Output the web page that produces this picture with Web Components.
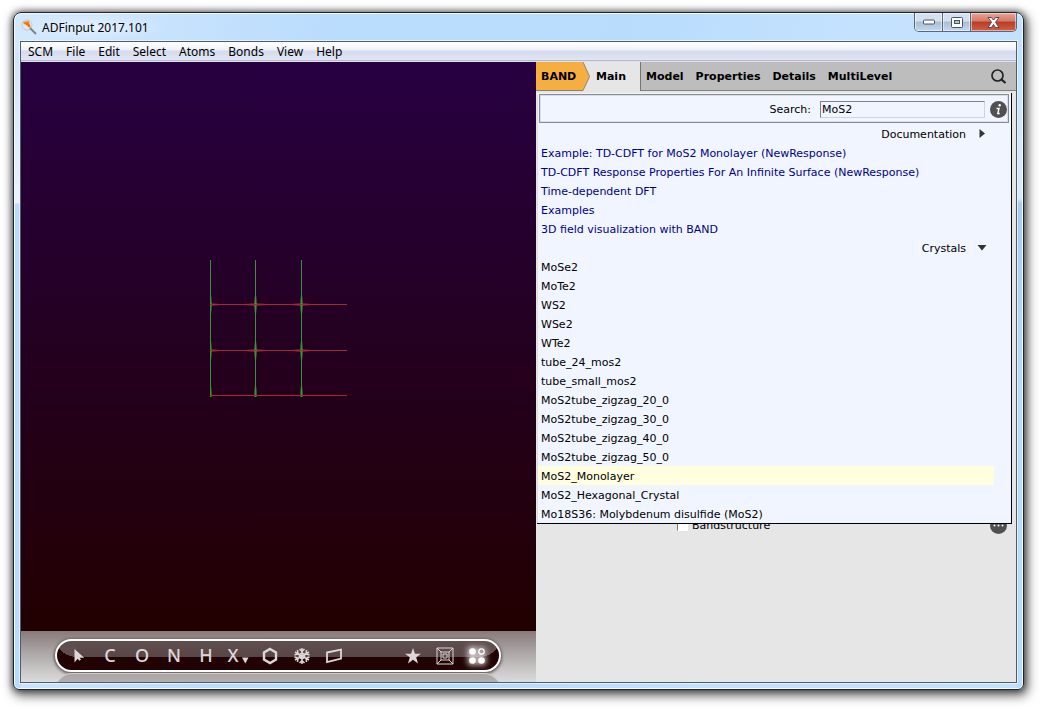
<!DOCTYPE html>
<html lang="en">
<head>
<meta charset="utf-8">
<title>ADFinput 2017.101</title>
<style>
html, body { height: 100%; }
body { margin: 0; box-sizing: border-box; padding: 12px 18px 19px 13px; background: #fff; font: 11px/19px "DejaVu Sans", sans-serif; color: #000; overflow: hidden; }
</style>
</head>
<body>
<app-window heading="ADFinput 2017.101">
  <menu-bar slot="menu" items="SCM,File,Edit,Select,Atoms,Bonds,View,Help"></menu-bar>
  <structure-view></structure-view>
  <side-panel>
    <tab-bar slot="tabs"></tab-bar>
    <search-popup slot="popup">
      <result-heading slot="results">Documentation</result-heading>
      <result-item slot="results" link>Example: TD-CDFT for MoS2 Monolayer (NewResponse)</result-item>
      <result-item slot="results" link>TD-CDFT Response Properties For An Infinite Surface (NewResponse)</result-item>
      <result-item slot="results" link>Time-dependent DFT</result-item>
      <result-item slot="results" link>Examples</result-item>
      <result-item slot="results" link>3D field visualization with BAND</result-item>
      <result-heading slot="results" open>Crystals</result-heading>
      <result-item slot="results">MoSe2</result-item>
      <result-item slot="results">MoTe2</result-item>
      <result-item slot="results">WS2</result-item>
      <result-item slot="results">WSe2</result-item>
      <result-item slot="results">WTe2</result-item>
      <result-item slot="results">tube_24_mos2</result-item>
      <result-item slot="results">tube_small_mos2</result-item>
      <result-item slot="results">MoS2tube_zigzag_20_0</result-item>
      <result-item slot="results">MoS2tube_zigzag_30_0</result-item>
      <result-item slot="results">MoS2tube_zigzag_40_0</result-item>
      <result-item slot="results">MoS2tube_zigzag_50_0</result-item>
      <result-item slot="results" active>MoS2_Monolayer</result-item>
      <result-item slot="results">MoS2_Hexagonal_Crystal</result-item>
      <result-item slot="results">Mo18S36: Molybdenum disulfide (MoS2)</result-item>
    </search-popup>
  </side-panel>
</app-window>

<script>
const RESET = `
  *, *::before, *::after { box-sizing: border-box; }
  button { font: inherit; color: inherit; background: none; border: 0; padding: 0; margin: 0; }
  svg { display: block; }
`;
function define(name, render) {
  customElements.define(name, class extends HTMLElement {
    constructor() {
      super();
      this.attachShadow({ mode: "open" });
    }
    connectedCallback() {
      this.shadowRoot.innerHTML = `<style>${RESET}</style>` + render(this);
    }
  });
}

define("app-window", el => `
<style>
  :host { display: flex; flex-direction: column; height: 100%; box-sizing: border-box; padding: 0 6px 6px;
    border: 1px solid #1b2530; border-radius: 8px 8px 6px 6px;
    background:
      linear-gradient(#cfe5fb, #eaf4fd 150px, #b9dcfd 151px) 0 40px / 7px 100% no-repeat,
      linear-gradient(#c2e1fe, #d8ebfd 145px, #a9cbee 151px, #b9dcfb 340px) 100% 40px / 7px 100% no-repeat,
      linear-gradient(100deg, #d3e8fc 0, #badcfd 320px, #b9dcfd 55%, #c4e2fe 75%, #c2e1fe 100%);
    box-shadow: inset 0 0 0 1px #f4faff, 0 0 6px 1px rgba(0,0,0,.5), 2px 4px 11px 2px rgba(0,0,0,.55); }
  header { display: flex; height: 28px; flex: none; justify-content: space-between; }
  .title { display: flex; align-items: center; gap: 5px; font: 12px/17px "Noto Sans", sans-serif; padding: 0 20px 0 1px;
    background: radial-gradient(closest-side, rgba(255,255,255,.45), rgba(255,255,255,0)); }
  h1 { font: inherit; margin: 0; }
  .controls { display: flex; height: 19px; border: 1px solid #58677b; border-top: 0; border-radius: 0 0 5px 5px; overflow: hidden; }
  .controls button { width: 28px; display: grid; place-items: center; background: linear-gradient(#d3e0ee 0 45%, #a9bdd4 50%, #c4d9ee); box-shadow: inset 0 0 0 1px rgba(255,255,255,.5); border-right: 1px solid #58677b; }
  .controls .close { width: 45px; border: 0; background: linear-gradient(#e6a596 0, #d37a68 45%, #bb3a22 50%, #cf6247); }
  .client { flex: 1; min-height: 0; display: flex; flex-direction: column; border: 1px solid #4e5c6c; box-shadow: 0 0 0 1px rgba(235,247,255,.75); }
  main { flex: 1; min-height: 0; display: flex; }
  ::slotted(structure-view) { flex: 1; min-width: 0; }
</style>
<header>
  <div class="title">
    <svg width="16" height="16" viewBox="0 0 16 16" aria-hidden="true">
      <circle cx="6" cy="6" r="5" fill="#e4e6e8" stroke="#c2cad2"/>
      <path d="M2 3l6-1 1 5-3-1-3-1z" fill="#ff8414"/><path d="M5 4l4 4" stroke="#ef6c00" stroke-width="2"/>
      <path d="M9 9l6 6" stroke="#828487" stroke-width="2"/>
    </svg>
    <h1>${el.getAttribute("heading")}</h1>
  </div>
  <div class="controls">
    <button aria-label="Minimize"><svg width="14" height="6" viewBox="0 0 14 6"><rect x="1.5" y="1" width="11" height="4" rx="1" fill="#fff" stroke="#485365"/></svg></button>
    <button aria-label="Maximize"><svg width="12" height="11" viewBox="0 0 12 11"><rect x=".5" y=".5" width="11" height="10" rx="1" fill="#fff" stroke="#485365"/><rect x="3.5" y="3.5" width="5" height="3" fill="#adc2d8" stroke="#485365"/></svg></button>
    <button class="close" aria-label="Close"><svg width="13" height="11" viewBox="0 0 13 11"><path d="M1 .5h3.500L6.500 3 8.500.5H12L8.500 5.300 12 10.500H8.500L6.500 7.500 4.500 10.500H1L4.500 5.300z" fill="#fff" stroke="#5a4550" stroke-width="1"/></svg></button>
  </div>
</header>
<div class="client"><slot name="menu"></slot><main><slot></slot></main></div>
`);

define("menu-bar", el => `
<style>
  :host { display: block; flex: none; height: 20px; background: linear-gradient(#fff 0, #eef1f9 40%, #d5dbed 45%, #dfe5f4 90%, #aab0c0 91%, #f3f4f8 100%); }
  nav { display: flex; gap: 13px; padding-left: 7px; font: 12px/20px "Noto Sans", sans-serif; }
</style>
<nav>${el.getAttribute("items").split(",").map(t => `<button>${t}</button>`).join("")}</nav>
`);

define("structure-view", () => `
<style>
  :host { display: flex; flex-direction: column; }
  .canvas { flex: 1; display: grid; place-items: center; padding-bottom: 36px; background: linear-gradient(#270041, #240020 50%, #220000); }
</style>
<div class="canvas">
  <svg width="137" height="137" viewBox="0 0 137 137" role="img" aria-label="Unit cell grid">
    <defs>
      <radialGradient id="g"><stop offset="0" stop-color="#3fc03f"/><stop offset="1" stop-color="#3fc03f" stop-opacity="0"/></radialGradient>
      <radialGradient id="r"><stop offset="0" stop-color="#d03838"/><stop offset="1" stop-color="#d03838" stop-opacity="0"/></radialGradient>
    </defs>
    <g fill="url(#r)">${[44.5, 90.5].map(y => [0, 45.5, 91.5].map(x => `<ellipse cx="${x}" cy="${y}" rx="13" ry="1.700"/>`).join("")).join("")}</g>
    <g fill="url(#g)">${[0.5, 45.5, 91.5].map(x => [44.5, 90.5, 135].map(y => `<ellipse cx="${x}" cy="${y}" rx="1.900" ry="12"/>`).join("")).join("")}</g>
    <path d="M.5 0v136M45.500 0v136M91.500 0v136" stroke="#3f8f42"/>
    <path d="M0 44.500h137M0 90.500h137M0 135.500h137" stroke="#a02a32"/>
  </svg>
</div>
<tool-dock></tool-dock>
`);

define("tool-dock", () => `
<style>
  :host { display: block; flex: none; height: 51px; padding: 8px 35px 0 34px; box-sizing: border-box; overflow: hidden; background: linear-gradient(#887a7a, #aaa4a4 40%, #dcdcdc); }
  .pill { display: flex; justify-content: space-between; height: 33px; padding: 0 6px 0 5px; border: 2px solid #fff; border-radius: 17px;
    background: radial-gradient(ellipse 20px 16px at 20px 0, #604e4e 99%, transparent) 0 0 / 20px 16px no-repeat,
      radial-gradient(ellipse 20px 16px at 0 0, #604e4e 99%, transparent) 100% 0 / 20px 16px no-repeat,
      linear-gradient(#604e4e, #584646) center top / calc(100% - 40px) 16px no-repeat, #220303;
    box-shadow: 0 1px 3px 1px rgba(40,20,20,.6); }
  .group { display: flex; }
  button { width: 32px; height: 29px; display: flex; align-items: center; justify-content: center; color: #dcd8d8; font: 500 18px/29px "Noto Sans", sans-serif; }
  .more { gap: 2px; }
  svg { fill: none; stroke: currentColor; }
  .glow { filter: drop-shadow(0 0 3px #fff) drop-shadow(0 0 3px rgba(255,255,255,.6)); }
  .shine { height: 22px; margin-top: 1px; border: 1px solid #d0cece; border-bottom: 0; border-radius: 17px 17px 0 0; background: linear-gradient(#aaa6a6, #bdbbbb); }
</style>
<div class="pill" role="toolbar">
  <div class="group">
    <button aria-label="Select"><svg width="18" height="18" viewBox="0 0 18 18"><path d="M5.500 2v13.500l3.200-3.700 1.600 2 1.700-1.300-1.300-1.800h4.500z" fill="currentColor" stroke="none"/></svg></button>
    <button>C</button><button>O</button><button>N</button><button>H</button>
    <button class="more" aria-label="X, other elements">X<svg width="8" height="18" viewBox="0 0 8 18"><path d="M1 10.500h6.500L4.300 16.500z" fill="currentColor" stroke="none"/></svg></button>
    <button aria-label="Ring"><svg width="18" height="18" viewBox="0 0 18 18"><path d="M9 2l6 3.500v7L9 16l-6-3.500v-7z" stroke-width="2.400"/></svg></button>
    <button aria-label="Crystal"><svg width="18" height="18" viewBox="0 0 18 18" stroke-width="1.500"><path d="M9 1v16M2 5l14 8M2 13L16 5M6.500 2L9 4.500 11.500 2M6.500 16L9 13.500l2.500 2.500M1.500 8l3.500-1.300L4.500 3M1.500 10L5 11.300 4.500 15M16.500 8L13 6.700l.5-3.700M16.500 10L13 11.300l.5 3.700M9 6l2.600 1.500v3L9 12l-2.600-1.500v-3z"/></svg></button>
    <button aria-label="Slab"><svg width="18" height="18" viewBox="0 0 18 18"><path d="M2 5.500L16 2.500v9L2 15z" stroke-width="1.800"/></svg></button>
  </div>
  <div class="group">
    <button aria-label="Favorites"><svg width="18" height="18" viewBox="0 0 18 18"><path d="M9 1l2 5.700h6l-4.800 3.600L14 16.500l-5-3.800-5 3.800 1.800-6.200L1 6.700h6z" fill="currentColor" stroke="none"/></svg></button>
    <button aria-label="Perspective box"><svg width="18" height="18" viewBox="0 0 18 18"><path d="M1 1h16v16H1zM5 5h8v8H5zM7 7h4v4H7zM1 1l4 4M17 1l-4 4M1 17l4-4M17 17l-4-4" stroke-width="1"/></svg></button>
    <button aria-label="Atom display"><svg class="glow" width="18" height="18" viewBox="0 0 18 18" overflow="visible"><g fill="#fff" stroke="none"><circle cx="4.500" cy="4.500" r="3.300"/><circle cx="4.500" cy="13.500" r="3.300"/><circle cx="13.500" cy="13.500" r="3.300"/></g><circle cx="13.500" cy="4.500" r="2.700" stroke="#fff" stroke-width="1.300"/></svg></button>
  </div>
</div>
<div class="shine"></div>
`);

define("side-panel", () => `
<style>
  :host { display: flex; flex-direction: column; flex: none; width: 480px; background: #e6e6e6; position: relative; }
  .form { flex: 1; display: flex; flex-direction: column; padding: 425px 9px 0 141px; }
  .row { display: flex; align-items: center; height: 19px; }
  label { display: flex; align-items: center; gap: 4px; flex: 1; }
  input { appearance: none; width: 11px; height: 11px; margin: 0; background: #fff; border: 1px solid #777; border-right-color: #fff; border-bottom-color: #fff; }
</style>
<slot name="tabs"></slot>
<div class="form">
  <div class="row">
    <label><input type="checkbox">Bandstructure</label>
    <button aria-label="More"><svg width="17" height="17" viewBox="0 0 17 17"><circle cx="8.500" cy="8.500" r="8.500" fill="#505050"/><g fill="#fff"><circle cx="4.500" cy="8.500" r="1"/><circle cx="8.500" cy="8.500" r="1"/><circle cx="12.500" cy="8.500" r="1"/></g></svg></button>
  </div>
</div>
<slot name="popup"></slot>
`);

define("tab-bar", () => `
<style>
  :host { display: flex; flex: none; height: 29px; background: #bdbdbd; font-weight: bold; }
  button { display: flex; align-items: center; font-weight: bold; }
  .first { background: #f6ae41; padding-left: 5px; width: 47px; border-bottom: 1px solid #808080; }
  .main { background: #e6e6e6; width: 58px; gap: 6px; border-right: 1px solid #757575; }
  .rest { flex: 1; display: flex; gap: 12px; padding: 0 9px 0 5px; border-bottom: 1px solid #808080; }
  .find { margin-left: auto; }
</style>
<button class="first">BAND</button>
<button class="main"><svg width="7" height="29" viewBox="0 0 7 29"><path d="M0 0l7 14.500L0 29z" fill="#f6ae41"/><path d="M0 0l6.500 14.500L0 28.500" fill="none" stroke="#8a8a8a"/></svg>Main</button>
<div class="rest">
  <button>Model</button><button>Properties</button><button>Details</button><button>MultiLevel</button>
  <button class="find" aria-label="Search"><svg width="17" height="17" viewBox="0 0 17 17" fill="none" stroke="#222"><circle cx="7.500" cy="7.500" r="5.500" stroke-width="1.700"/><path d="M11.500 11.500l4 3.500" stroke-width="2.200"/></svg></button>
</div>
`);

define("search-popup", () => `
<style>
  :host { display: block; position: absolute; top: 31px; left: 1px; right: 4px; background: #f0f5ff; border: solid #000; border-width: 0 1px 1px 0; box-shadow: inset 0 2px #f4f4f6, inset 1px 0 #dedee0; }
  .search { display: flex; align-items: center; height: 29px; margin: 0 2px 1px; border: 1px solid #858b98; box-shadow: inset 0 0 0 1px #d8dde8; padding: 1px 1px 0 0; }
  .wrap { padding: 1px 0 0; }
  label { flex: 1; text-align: right; padding-right: 9px; }
  input { font: inherit; height: 17px; width: 165px; margin: 0 5px 0 0; padding: 0 0 0 1px; background: #f0f5ff; color: #000; border: 1px solid #7d828d; border-right-color: #ccd3e4; border-bottom-color: #ccd3e4; border-radius: 0; }
</style>
<div class="wrap">
<div class="search">
  <label for="q">Search:</label><input id="q" value="MoS2">
  <button aria-label="Information"><svg width="17" height="17" viewBox="0 0 17 17"><circle cx="8.500" cy="8.500" r="8.500" fill="#505050"/><circle cx="9.700" cy="4.300" r="1.200" fill="#fff"/><path d="M6.500 7.500h2.500L7.800 12.500h1.900" fill="none" stroke="#fff" stroke-width="1.400"/></svg></button>
</div>
<slot name="results"></slot>
</div>
`);

define("result-heading", el => `
<style>
  :host { display: flex; justify-content: flex-end; box-sizing: border-box; height: 19px; padding: 1px 24px 0 0; }
  button { display: flex; align-items: center; gap: 11px; }
</style>
<button aria-expanded="${el.hasAttribute("open")}"><slot></slot><svg width="10" height="10" viewBox="0 0 10 10"><path d="${el.hasAttribute("open") ? "M.5 2h9L5 7.500z" : "M2.500 0l5.500 4.500-5.500 4.500z"}" fill="#333"/></svg></button>
`);

define("result-item", el => `
<style>
  :host { display: block; box-sizing: border-box; height: 19px; margin: 0 17px 0 1px; padding: 1px 0 0 3px; }
  :host([active]) { background: #ffffe0; }
  a { text-decoration: none; color: #000; }
  :host([link]) a { color: #00008b; }
</style>
<a href="#"><slot></slot></a>
`);
</script>
</body>
</html>
